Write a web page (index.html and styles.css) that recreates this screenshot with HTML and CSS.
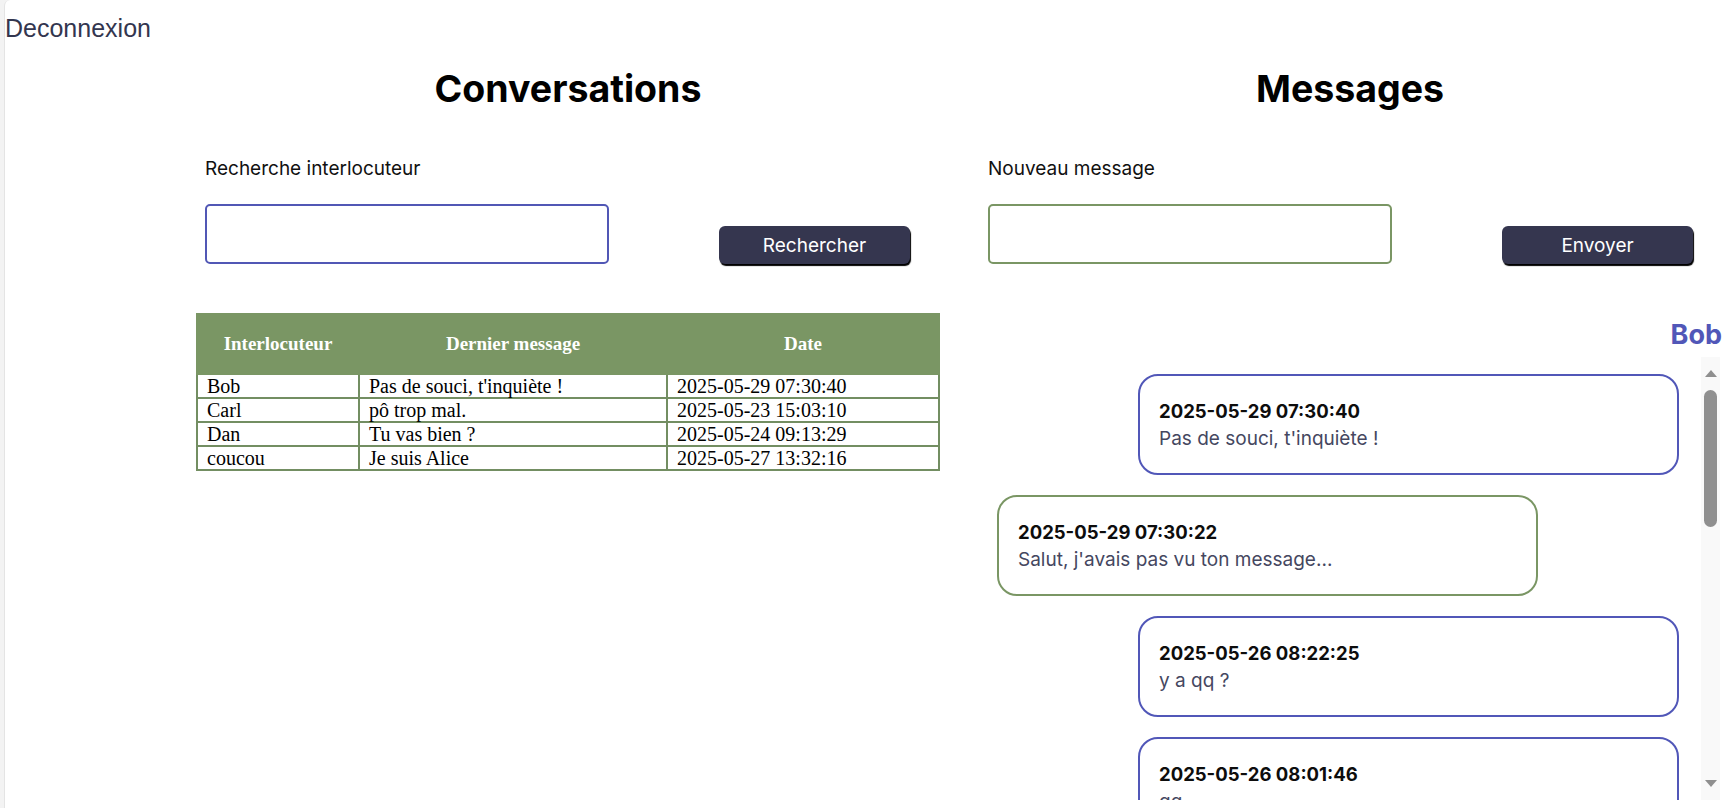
FILE: index.html
```html
<!DOCTYPE html>
<html lang="fr">
<head>
<meta charset="utf-8">
<title>Messagerie</title>
<link rel="stylesheet" href="styles.css">
</head>
<body>
<div class="page">
  <header class="topbar"><a class="logout" href="#">Deconnexion</a></header>
  <main class="columns">
    <section class="col">
      <h1 class="col-title">Conversations</h1>
      <form class="entry">
        <label class="entry-label" for="q">Recherche interlocuteur</label>
        <div class="entry-row">
          <input id="q" class="entry-input entry-input--blue" type="text">
          <button class="entry-btn" type="button">Rechercher</button>
        </div>
      </form>
      <table class="conv-table">
        <colgroup><col class="c1"><col class="c2"><col class="c3"></colgroup>
        <thead>
          <tr><th>Interlocuteur</th><th>Dernier message</th><th>Date</th></tr>
        </thead>
        <tbody>
          <tr><td>Bob</td><td>Pas de souci, t'inquiète !</td><td>2025-05-29 07:30:40</td></tr>
          <tr><td>Carl</td><td>pô trop mal.</td><td>2025-05-23 15:03:10</td></tr>
          <tr><td>Dan</td><td>Tu vas bien ?</td><td>2025-05-24 09:13:29</td></tr>
          <tr><td>coucou</td><td>Je suis Alice</td><td>2025-05-27 13:32:16</td></tr>
        </tbody>
      </table>
    </section>
    <section class="col col--right">
      <h1 class="col-title">Messages</h1>
      <form class="entry">
        <label class="entry-label" for="m">Nouveau message</label>
        <div class="entry-row">
          <input id="m" class="entry-input entry-input--green" type="text">
          <button class="entry-btn" type="button">Envoyer</button>
        </div>
      </form>
      <h2 class="thread-name">Bob</h2>
      <div class="thread">
        <div class="thread-list">
          <div class="bubble bubble--them"><div class="bubble-date">2025-05-29 07:30:40</div><div class="bubble-text">Pas de souci, t'inquiète !</div></div>
          <div class="bubble bubble--me"><div class="bubble-date">2025-05-29 07:30:22</div><div class="bubble-text">Salut, j'avais pas vu ton message...</div></div>
          <div class="bubble bubble--them"><div class="bubble-date">2025-05-26 08:22:25</div><div class="bubble-text">y a qq ?</div></div>
          <div class="bubble bubble--them"><div class="bubble-date">2025-05-26 08:01:46</div><div class="bubble-text">qq</div></div>
          <div class="bubble bubble--me"><div class="bubble-date">2025-05-25 18:42:03</div><div class="bubble-text">Oui ça va, et toi ?</div></div>
          <div class="bubble bubble--them"><div class="bubble-date">2025-05-25 18:40:51</div><div class="bubble-text">Ça va ?</div></div>
        </div>
        <div class="scrollbar" aria-hidden="true">
          <div class="scrollbar-btn"><span class="arrow arrow--up"></span></div>
          <div class="scrollbar-thumb"></div>
          <div class="scrollbar-track"></div>
          <div class="scrollbar-btn"><span class="arrow arrow--down"></span></div>
        </div>
      </div>
    </section>
  </main>
</div>
</body>
</html>
```
FILE: styles.css
```css
html, body {
  margin: 0;
  padding: 0;
  height: 100%;
  overflow: hidden;
  background: #f3f3f3;
}

.page {
  margin-left: 4px;
  height: 100%;
  background: #ffffff;
  border-left: 1px solid #e4e4e4;
  border-top-left-radius: 6px;
  overflow: hidden;
}

.topbar {
  padding-top: 14px;
  height: 29px;
}

.logout {
  font-family: "Liberation Sans", Arial, sans-serif;
  font-size: 25px;
  line-height: 29px;
  color: #33364f;
  text-decoration: none;
}

.columns {
  display: grid;
  grid-template-columns: 782px 782px;
  padding-left: 172px;
}

.col {
  display: flex;
  flex-direction: column;
  min-width: 0;
}

.col-title {
  margin: 22px 0 0;
  font-family: Inter, "Noto Sans", sans-serif;
  font-weight: 700;
  font-size: 37.5px;
  line-height: 48px;
  text-align: center;
  color: #000;
}

.entry {
  margin: 44px 0 0;
  padding-left: 28px;
}

.col--right .entry {
  padding-left: 29px;
}

.entry-label {
  display: block;
  font-family: Inter, "Noto Sans", sans-serif;
  font-size: 19px;
  line-height: 24px;
  color: #111;
}

.entry-row {
  display: flex;
  align-items: flex-end;
  margin-top: 23px;
}

.entry-input {
  box-sizing: border-box;
  width: 404px;
  height: 60px;
  border: 2px solid;
  border-radius: 5px;
  background: #fff;
  outline: none;
  margin: 0;
}

.entry-input--blue { border-color: #5157b5; }
.entry-input--green { border-color: #7a9664; }

.entry-btn {
  margin: 0 0 0 110px;
  width: 191px;
  height: 38px;
  padding: 0;
  background: #35364f;
  color: #fff;
  border: 0;
  border-radius: 6px;
  box-shadow: 1px 2px 1px #000;
  font-family: Inter, "Noto Sans", sans-serif;
  font-size: 19px;
}

.conv-table {
  margin: 49px auto 0;
  width: 742px;
  table-layout: fixed;
  border-collapse: collapse;
  border: 2px solid #738e62;
  font-family: "Liberation Serif", "Times New Roman", serif;
}

.conv-table .c1 { width: 162px; }
.conv-table .c2 { width: 308px; }
.conv-table .c3 { width: 272px; }

.conv-table th {
  height: 58px;
  padding: 0;
  background: #7a9664;
  color: #fff;
  font-size: 19px;
  font-weight: 700;
  text-align: center;
  border: 2px solid #7a9664;
}

.conv-table td {
  padding: 0 9px;
  font-size: 20px;
  line-height: 22px;
  color: #000;
  border: 2px solid #738e62;
  white-space: nowrap;
}

.thread-name {
  margin: 54px 19px 0 0;
  font-family: Inter, "Noto Sans", sans-serif;
  font-weight: 700;
  font-size: 27px;
  line-height: 33px;
  text-align: right;
  color: #5157b8;
}

.thread {
  margin: 6px 21px 0 29px;
  height: 443px;
  display: flex;
}

.thread-list {
  flex: 1;
  min-width: 0;
  overflow: hidden;
  box-sizing: border-box;
  padding-top: 17px;
  display: flex;
  flex-direction: column;
  gap: 20px;
}

.bubble {
  box-sizing: border-box;
  flex-shrink: 0;
  width: 541px;
  border: 2px solid;
  border-radius: 20px;
  padding: 22px 19px 21px;
  font-family: Inter, "Noto Sans", sans-serif;
}

.bubble--them {
  align-self: flex-end;
  margin-right: 22px;
  border-color: #5157b8;
}

.bubble--me {
  align-self: flex-start;
  margin-left: 9px;
  border-color: #7a9664;
}

.bubble-date {
  font-weight: 700;
  font-size: 18.5px;
  line-height: 27px;
  color: #0d0d0d;
}

.bubble-text {
  font-size: 19px;
  line-height: 27px;
  color: #45475f;
}

.scrollbar {
  width: 19px;
  display: flex;
  flex-direction: column;
  align-items: center;
  background: #f9f9f9;
}

.scrollbar-btn {
  height: 33px;
  width: 100%;
  display: flex;
  align-items: center;
  justify-content: center;
}

.arrow {
  width: 0;
  height: 0;
  border-left: 6px solid transparent;
  border-right: 6px solid transparent;
}

.arrow--up { border-bottom: 7px solid #8f8f8f; }
.arrow--down { border-top: 7px solid #8f8f8f; }

.scrollbar-thumb {
  width: 13px;
  height: 137px;
  border-radius: 7px;
  background: #8f8f8f;
}

.scrollbar-track {
  flex: 1;
}
```
